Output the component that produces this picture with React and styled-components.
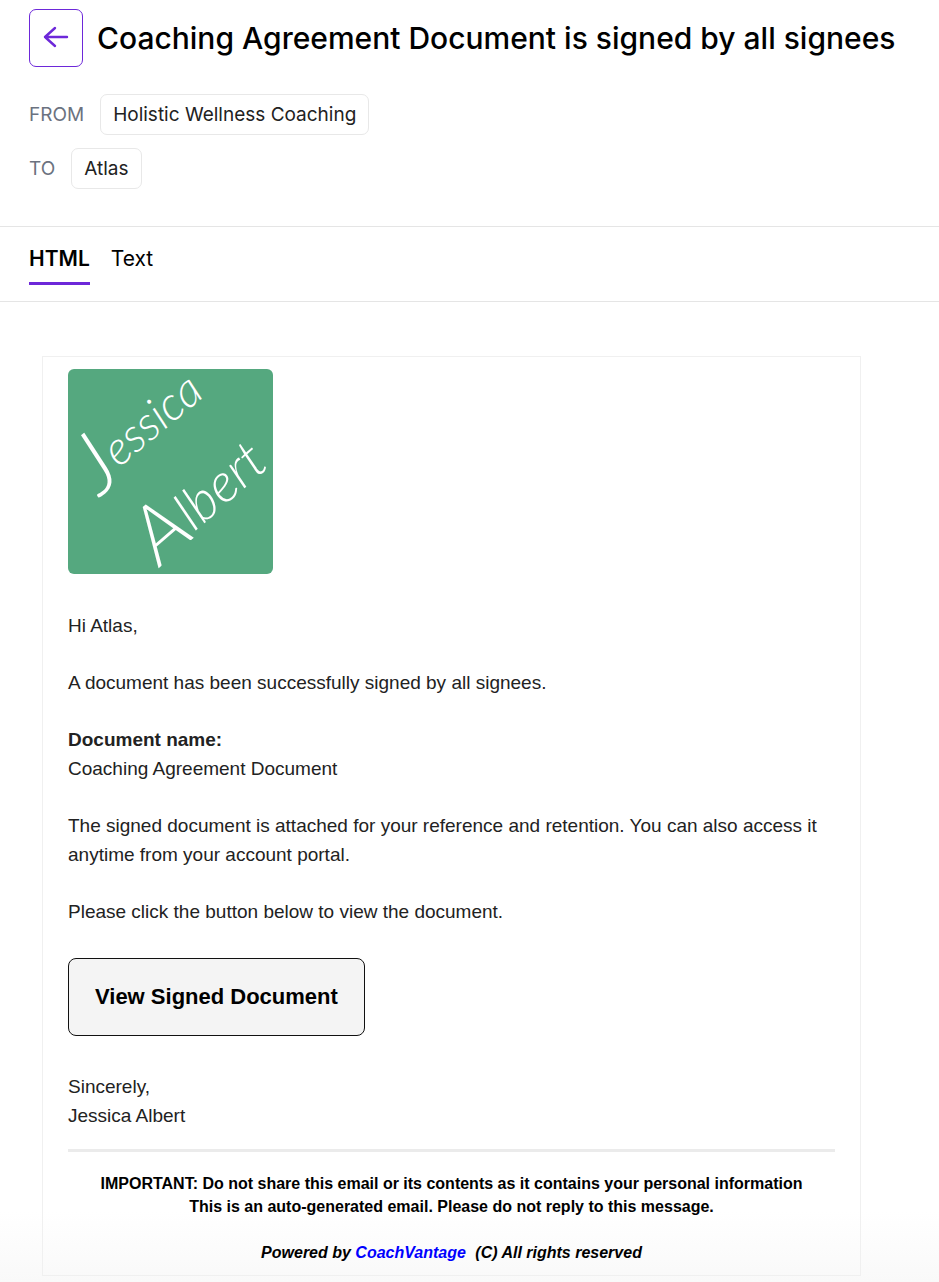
import React, { useState } from 'react';
import styled, { createGlobalStyle } from 'styled-components';


const GlobalStyle = createGlobalStyle`
	* {
		box-sizing: border-box;
	}

	body {
		margin: 0;
		background: #fff;
		color: #000;
		font-family: Inter, "Liberation Sans", sans-serif;
	}
`;

const Page = styled.main`
	min-height: 100vh;
	padding-bottom: 6px;
	background: linear-gradient(to top, #f9f9f9 0, #fff 70px);
`;

const Header = styled.header`
	padding: 9px 29px 37px;
	border-bottom: 1px solid #e5e5e5;
`;

const TitleRow = styled.div`
	display: flex;
	align-items: center;
	gap: 14px;
	margin-bottom: 27px;
`;

const BackButton = styled.button`
	display: flex;
	align-items: center;
	justify-content: center;
	flex: none;
	width: 54px;
	height: 58px;
	padding: 0 0 2px;
	border: 1px solid #6d28d9;
	border-radius: 7px;
	background: #fff;
	color: #6d28d9;
	cursor: pointer;
`;

const Title = styled.h1`
	margin: 0;
	font-size: 30px;
	line-height: 40px;
	font-weight: 500;
`;

// FROM / TO line with the name in a bordered chip
const Party = styled.div`
	display: flex;
	align-items: center;
	gap: 16px;
	margin-top: 13px;
	color: #6b7280;
	font-size: 19px;
`;

const Chip = styled.span`
	padding: 0 12px;
	border: 1px solid #e8e8e8;
	border-radius: 7px;
	color: #222;
	font-size: 19px;
	line-height: 39px;
`;

const Tabs = styled.div`
	display: flex;
	gap: 21px;
	padding: 8px 29px 16px;
	border-bottom: 1px solid #e5e5e5;
`;

const Tab = styled.button`
	height: 50px;
	padding: 0;
	border: none;
	border-bottom: 3px solid ${props => props.$active ? '#6d28d9' : 'transparent'};
	background: none;
	color: #000;
	font-family: inherit;
	font-size: 21px;
	font-weight: ${props => props.$active ? 600 : 400};
	cursor: pointer;
`;

// The email itself
const Email = styled.article`
	margin: 54px 78px 0 42px;
	padding: 12px 25px 11px;
	border: 1px solid #f0f0f0;
	color: #222;
	font-family: "Liberation Sans", Arial, sans-serif;
	font-size: 19px;
	line-height: 29px;
`;

const Logo = styled.svg`
	display: block;
	width: 205px;
	height: 205px;
	margin-bottom: 37px;
	border-radius: 6px;
	background: #55a87f;
	fill: #fff;
	font-family: Lato, sans-serif;
	font-style: italic;
	font-weight: 300;
`;

const Paragraph = styled.p`
	margin: 0 0 28px;
`;

const ViewButton = styled.button`
	display: block;
	margin: 32px 0 36px;
	padding: 0 26px;
	border: 1px solid #111;
	border-radius: 8px;
	background: #f4f4f4;
	color: #000;
	font-family: inherit;
	font-size: 22px;
	font-weight: 700;
	line-height: 76px;
	cursor: pointer;
`;

const Divider = styled.hr`
	height: 3px;
	margin: 19px 0 20px;
	border: none;
	background: #ebebeb;
`;

const Footer = styled.footer`
	color: #000;
	font-size: 16px;
	font-weight: 700;
	line-height: 23px;
	text-align: center;
`;

const Powered = styled.p`
	margin: 23px 0 0;
	font-style: italic;
`;

const BrandLink = styled.a`
	margin-right: 5px;
	color: #00f;
	text-decoration: none;
`;

const ArrowIcon = () => (
	<svg width="26" height="22" viewBox="0 0 26 22" fill="none" stroke="currentColor" strokeWidth="2.4" strokeLinecap="round" strokeLinejoin="round">
		<path d="M24 11H2M12 2L2 11l10 9" />
	</svg>
)

const SignatureLogo = () => (
	<Logo viewBox="0 0 205 205" role="img" aria-label="Jessica Albert">
		<text transform="translate(32 128) rotate(-40)">
			<tspan fontSize="84">J</tspan>
			<tspan fontSize="47" dy="-10">essica</tspan>
		</text>
		<text transform="translate(92 198) rotate(-41)">
			<tspan fontSize="80">A</tspan>
			<tspan fontSize="54" dy="-4">lbert</tspan>
		</text>
	</Logo>
)

const App = () => {
	const [tab, setTab] = useState('HTML');

	return (
		<Page>
			<GlobalStyle />
			<Header>
				<TitleRow>
					<BackButton type="button" aria-label="Back"><ArrowIcon /></BackButton>
					<Title>Coaching Agreement Document is signed by all signees</Title>
				</TitleRow>
				<Party>FROM <Chip>Holistic Wellness Coaching</Chip></Party>
				<Party>TO <Chip>Atlas</Chip></Party>
			</Header>
			<Tabs role="tablist">
				{['HTML', 'Text'].map(name => (
					<Tab
						key={name}
						type="button"
						role="tab"
						aria-selected={tab === name}
						$active={tab === name}
						onClick={() => setTab(name)}
					>
						{name}
					</Tab>
				))}
			</Tabs>
			<Email>
				<SignatureLogo />
				<Paragraph>Hi Atlas,</Paragraph>
				<Paragraph>A document has been successfully signed by all signees.</Paragraph>
				<Paragraph>
					<strong>Document name:</strong><br />
					Coaching Agreement Document
				</Paragraph>
				<Paragraph>
					The signed document is attached for your reference and retention. You can also access it
					anytime from your account portal.
				</Paragraph>
				<Paragraph>Please click the button below to view the document.</Paragraph>
				<ViewButton type="button">View Signed Document</ViewButton>
				<div>Sincerely,<br />Jessica Albert</div>
				<Divider />
				<Footer>
					IMPORTANT: Do not share this email or its contents as it contains your personal information<br />
					This is an auto-generated email. Please do not reply to this message.
					<Powered>
						Powered by <BrandLink href="#">CoachVantage</BrandLink> (C) All rights reserved
					</Powered>
				</Footer>
			</Email>
		</Page>
	)
}

export default App;
